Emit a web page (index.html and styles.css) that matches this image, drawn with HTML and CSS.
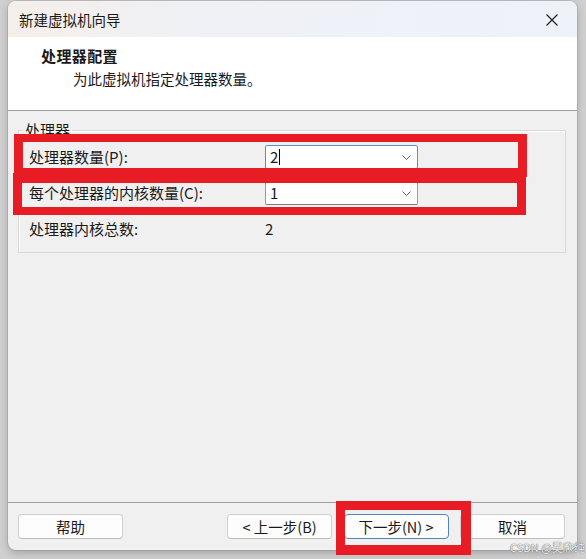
FILE: index.html
```html
<!DOCTYPE html>
<html lang="zh-CN">
<head>
  <meta charset="UTF-8" />
  <meta name="viewport" content="width=device-width, initial-scale=1.0"/>
  <title>新建虚拟机向导</title>
  <link rel="stylesheet" href="styles.css">
</head>
<body>

  <!-- Wizard window -->
  <div class="window">
    <div class="titlebar">
      <span class="title">新建虚拟机向导</span>
      <svg class="close" width="12" height="12" viewBox="0 0 12 12">
        <path d="M0.5 0.5 L11.5 11.5 M11.5 0.5 L0.5 11.5" stroke="#1c1c1c" stroke-width="1.1" fill="none"/>
      </svg>
    </div>

    <div class="header">
      <div class="header-title">处理器配置</div>
      <div class="header-sub">为此虚拟机指定处理器数量。</div>
    </div>

    <div class="content">
      <fieldset class="group">
        <legend>处理器</legend>
        <div class="row">
          <label>处理器数量(P):</label>
          <div class="combo focused">
            <span class="value">2</span><span class="caret"></span>
            <svg class="chevron" width="9" height="5" viewBox="0 0 9 5">
              <path d="M0.5 0.5 L4.5 4.5 L8.5 0.5" stroke="#606060" stroke-width="1" fill="none"/>
            </svg>
          </div>
        </div>
        <div class="row">
          <label>每个处理器的内核数量(C):</label>
          <div class="combo">
            <span class="value">1</span>
            <svg class="chevron" width="9" height="5" viewBox="0 0 9 5">
              <path d="M0.5 0.5 L4.5 4.5 L8.5 0.5" stroke="#606060" stroke-width="1" fill="none"/>
            </svg>
          </div>
        </div>
        <div class="row">
          <label>处理器内核总数:</label>
          <span class="total">2</span>
        </div>
      </fieldset>
    </div>

    <div class="footer">
      <button class="btn">帮助</button>
      <div class="spacer"></div>
      <button class="btn">&lt; 上一步(B)</button>
      <button class="btn default">下一步(N) &gt;</button>
      <button class="btn">取消</button>
    </div>
  </div>

  <!-- red annotation boxes -->
  <div class="mark mark-count"></div>
  <div class="mark mark-cores"></div>
  <div class="mark mark-next"></div>

  <div class="watermark">CSDN @吴欣纯</div>

</body>
</html>
```

FILE: styles.css
```css
html, body {
  margin: 0;
  padding: 0;
}

body {
  background: #d0d0d0;
  font-family: "Noto Sans CJK SC", "Noto Sans", sans-serif;
  color: #1a1a1a;
  width: 586px;
  height: 559px;
  overflow: hidden;
  position: relative;
}

.window {
  position: relative;
  margin: 1px 0 0 8px;
  width: 569px;
  height: 549px;
  background: #f0f0f0;
  border-radius: 8px;
  overflow: hidden;
  box-shadow: 0 3px 8px rgba(0,0,0,0.22), 0 0 0 1px rgba(0,0,0,0.08);
}

.titlebar {
  height: 36px;
  display: flex;
  align-items: center;
  justify-content: space-between;
  padding: 0 19px 0 11px;
  background: linear-gradient(90deg, #f5efea 0%, #eff1f6 35%, #eef2f9 100%);
}

.title {
  font-size: 14.5px;
  line-height: 20px;
  margin-top: 1px;
}

.close {
  margin-top: 2px;
}

.header {
  height: 74px;
  box-sizing: border-box;
  background: #ffffff;
  border-bottom: 1px solid #a0a0a0;
  padding: 9px 0 0 33px;
}

.header-title {
  font-size: 15px;
  font-weight: bold;
  line-height: 20px;
  letter-spacing: 0.4px;
}

.header-sub {
  font-size: 14.5px;
  line-height: 20px;
  margin: 3px 0 0 32px;
}

.content {
  height: 391px;
  padding: 10px 11px 0 10px;
  box-sizing: border-box;
}

.group {
  margin: 0;
  padding: 6px 10px 11px 10px;
  border: 1px solid #d9d9d9;
  box-shadow: inset 1px 1px 0 #ffffff;
  display: flex;
  flex-direction: column;
  gap: 12px;
}

.group legend {
  font-size: 15px;
  line-height: 18px;
  padding: 0 2px;
  margin-left: -6px;
}

.row {
  display: flex;
  align-items: center;
  height: 24px;
}

.row label {
  width: 236px;
  font-size: 15px;
  line-height: 24px;
}

.combo {
  width: 153px;
  height: 24px;
  box-sizing: border-box;
  background: #ffffff;
  border: 1px solid #9a9a9a;
  border-bottom-color: #7a7a7a;
  border-radius: 2px;
  display: flex;
  align-items: center;
  padding: 0 6px 0 4px;
}

.combo.focused {
  border-color: #5b8fcc;
}

.combo .value {
  font-size: 15px;
  line-height: 20px;
}

.caret {
  display: inline-block;
  width: 1px;
  height: 16px;
  background: #000;
  margin-left: 1px;
}

.chevron {
  margin-left: auto;
}

.total {
  font-size: 15px;
  line-height: 24px;
}

.footer {
  height: 48px;
  border-top: 1px solid #a0a0a0;
  box-sizing: border-box;
  padding: 11px 12px 0 10px;
  display: flex;
  gap: 11.5px;
}

.spacer {
  flex: 1;
}

.btn {
  width: 105px;
  height: 25px;
  font-family: inherit;
  font-size: 14.5px;
  line-height: 20px;
  color: #1a1a1a;
  background: #fdfdfd;
  border: 1px solid #d0d0d0;
  border-bottom-color: #bdbdbd;
  border-radius: 4px;
  padding: 0;
}

.btn.default {
  border-color: #4c86c4;
}

.mark {
  position: absolute;
  border: 9px solid #e81c24;
}

.mark-count {
  left: 14px;
  top: 134px;
  width: 495px;
  height: 26px;
  border-top-width: 8px;
}

.mark-cores {
  left: 13px;
  top: 173px;
  width: 495px;
  height: 24px;
  border-top-width: 10px;
  border-bottom-width: 8px;
}

.mark-next {
  left: 336px;
  top: 501px;
  width: 116px;
  height: 35px;
  border-right-width: 10px;
  border-bottom-width: 10px;
}

.watermark {
  position: absolute;
  left: 510px;
  top: 540px;
  font-size: 11px;
  line-height: 14px;
  color: rgba(245,245,245,0.95);
  text-shadow: 0 0 1px #6e6e6e, 0 0 1px #6e6e6e;
}
```
